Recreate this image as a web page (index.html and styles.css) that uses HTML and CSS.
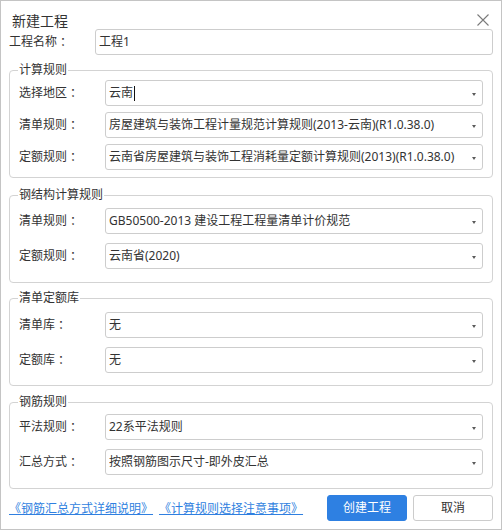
FILE: index.html
```html
<!DOCTYPE html>
<html lang="zh-CN">
<head>
<meta charset="utf-8">
<title>新建工程</title>
<link rel="stylesheet" href="styles.css">
</head>
<body>
<div class="dialog">
  <div class="title-bar">
    <span class="title">新建工程</span>
    <svg class="close" width="12" height="12" viewBox="0 0 12 12"><path d="M0.5 0.5 L11.5 11.5 M11.5 0.5 L0.5 11.5" stroke="#7a7a7a" stroke-width="1.1" fill="none"/></svg>
  </div>

  <div class="field-row">
    <span class="field-label">工程名称<span class="colon">：</span></span>
    <div class="box"><span class="box-text">工程1</span></div>
  </div>

  <fieldset class="group group-calc">
    <legend>计算规则</legend>
    <div class="group-body tight">
      <div class="field-row">
        <span class="field-label">选择地区<span class="colon">：</span></span>
        <div class="box select"><span class="box-text">云南<span class="caret"></span></span><span class="arrow"></span></div>
      </div>
      <div class="field-row">
        <span class="field-label">清单规则<span class="colon">：</span></span>
        <div class="box select"><span class="box-text">房屋建筑与装饰工程计量规范计算规则(2013-云南)(R1.0.38.0)</span><span class="arrow"></span></div>
      </div>
      <div class="field-row">
        <span class="field-label">定额规则<span class="colon">：</span></span>
        <div class="box select"><span class="box-text">云南省房屋建筑与装饰工程消耗量定额计算规则(2013)(R1.0.38.0)</span><span class="arrow"></span></div>
      </div>
    </div>
  </fieldset>

  <fieldset class="group group-steel">
    <legend>钢结构计算规则</legend>
    <div class="group-body">
      <div class="field-row">
        <span class="field-label">清单规则<span class="colon">：</span></span>
        <div class="box select"><span class="box-text">GB50500-2013 建设工程工程量清单计价规范</span><span class="arrow"></span></div>
      </div>
      <div class="field-row">
        <span class="field-label">定额规则<span class="colon">：</span></span>
        <div class="box select"><span class="box-text">云南省(2020)</span><span class="arrow"></span></div>
      </div>
    </div>
  </fieldset>

  <fieldset class="group group-lib">
    <legend>清单定额库</legend>
    <div class="group-body">
      <div class="field-row">
        <span class="field-label">清单库<span class="colon">：</span></span>
        <div class="box select"><span class="box-text">无</span><span class="arrow"></span></div>
      </div>
      <div class="field-row">
        <span class="field-label">定额库<span class="colon">：</span></span>
        <div class="box select"><span class="box-text">无</span><span class="arrow"></span></div>
      </div>
    </div>
  </fieldset>

  <fieldset class="group group-rebar">
    <legend>钢筋规则</legend>
    <div class="group-body">
      <div class="field-row">
        <span class="field-label">平法规则<span class="colon">：</span></span>
        <div class="box select"><span class="box-text">22系平法规则</span><span class="arrow"></span></div>
      </div>
      <div class="field-row">
        <span class="field-label">汇总方式<span class="colon">：</span></span>
        <div class="box select"><span class="box-text">按照钢筋图示尺寸-即外皮汇总</span><span class="arrow"></span></div>
      </div>
    </div>
  </fieldset>

  <div class="footer">
    <div class="links">
      <a class="link" href="#">《钢筋汇总方式详细说明》</a>
      <a class="link" href="#">《计算规则选择注意事项》</a>
    </div>
    <div class="buttons">
      <button class="btn btn-primary">创建工程</button>
      <button class="btn">取消</button>
    </div>
  </div>
</div>
</body>
</html>
```

FILE: styles.css
```css
* { box-sizing: border-box; }

html, body {
  margin: 0;
  padding: 0;
  background: #ffffff;
}

body {
  font-family: "Noto Sans", "Noto Sans CJK SC", "Liberation Sans", sans-serif;
  font-size: 12px;
  color: #333333;
}

.dialog {
  width: 502px;
  height: 530px;
  border: 1px solid #c4c4c4;
  background: #ffffff;
  padding: 0 8px;
}

.title-bar {
  height: 28px;
  padding-top: 11px;
  display: flex;
  justify-content: space-between;
  align-items: flex-start;
}

.title {
  font-size: 14px;
  line-height: 17px;
  padding-left: 3px;
  color: #333333;
}

.close {
  display: block;
  margin-top: 2px;
  margin-right: 4px;
}

.field-row {
  display: flex;
  align-items: center;
  height: 26px;
}

.field-label {
  width: 86px;
  flex: none;
  line-height: 16px;
  color: #333333;
}

.colon {
  margin-left: 3px;
}

.box {
  flex: 1;
  height: 26px;
  border: 1px solid #cdcdcd;
  border-radius: 3px;
  background: #ffffff;
  display: flex;
  align-items: center;
  padding: 0 6px 0 3px;
  min-width: 0;
}

.box-text {
  flex: 1;
  line-height: 16px;
  white-space: nowrap;
  overflow: hidden;
  color: #333333;
  display: flex;
  align-items: center;
}

.caret {
  display: inline-block;
  width: 1px;
  height: 15px;
  background: #111111;
  margin-left: 1px;
}

.arrow {
  flex: none;
  width: 0;
  height: 0;
  border-left: 2.5px solid transparent;
  border-right: 2.5px solid transparent;
  border-top: 3px solid #5a5a5a;
  margin-top: 2px;
}

.group {
  margin: 0;
  border: 1px solid #d3d3d3;
  border-radius: 4px;
  padding: 6px 9px 13px;
  min-width: 0;
}

.group legend {
  font-size: 12px;
  line-height: 14px;
  padding: 0 1px;
  margin-left: -1px;
  color: #333333;
}

.group-body {
  display: flex;
  flex-direction: column;
  gap: 9px;
}

.group-body.tight { gap: 6px; }

.group-calc { margin-top: 8px; padding-top: 3px; padding-bottom: 7px; }
.group-steel { margin-top: 10px; }
.group-lib { margin-top: 8px; padding-top: 7px; padding-bottom: 12px; }
.group-rebar { margin-top: 9px; padding-top: 5px; }

.footer {
  margin-top: 6px;
  display: flex;
  justify-content: space-between;
  align-items: center;
  height: 26px;
}

.links {
  display: flex;
  gap: 6px;
  padding-top: 2px;
}

.link {
  color: #2f7fe0;
  text-decoration: underline;
  line-height: 16px;
  font-size: 12px;
}

.buttons {
  display: flex;
  gap: 6px;
}

.btn {
  width: 80px;
  height: 26px;
  border: 1px solid #cccccc;
  border-radius: 3px;
  background: #ffffff;
  color: #333333;
  font-family: inherit;
  font-size: 12px;
  line-height: 16px;
  padding: 0;
}

.btn-primary {
  background: #2e80e2;
  border-color: #2e80e2;
  color: #ffffff;
}
```
